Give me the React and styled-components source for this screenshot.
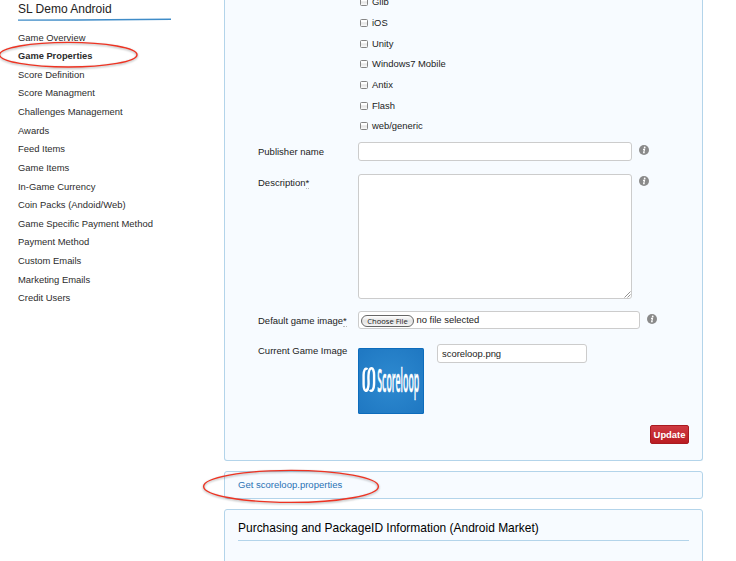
import React from "react";
import styled, { createGlobalStyle } from "styled-components";

const GlobalStyle = createGlobalStyle`
  * { box-sizing: border-box; }
  body {
    margin: 0;
    overflow: hidden;
    background: #fff;
    color: #222;
    font-family: "Liberation Sans", Arial, sans-serif;
    font-size: 9.42px;
  }
`;

const Page = styled.div`
  position: relative;
  display: flex;
  width: 736px;
  height: 561px;
  overflow: hidden;
`;

const Sidebar = styled.nav`
  flex: 0 0 224px;
  padding: 1px 0 0 18px;
`;

const SidebarTitle = styled.h2`
  margin: 0;
  font-size: 12px;
  font-weight: 400;
  line-height: 16px;
`;

const TitleRule = styled.svg`
  display: block;
  width: 154px;
  height: 5px;
`;

const Menu = styled.ul`
  list-style: none;
  margin: 0;
  padding: 6.6px 0 0;
`;

const MenuItem = styled.li`
  height: 18.64px;
  line-height: 18.64px;
  color: #2c2c2c;
  font-weight: ${(p) => (p.$active ? 700 : 400)};
  font-size: ${(p) => (p.$active ? "9.3px" : "inherit")};
`;

const Main = styled.main`
  display: flex;
  flex-direction: column;
  gap: 10px;
  width: 479px;
`;

const Panel = styled.section`
  flex: none;
  height: ${(p) => p.$height}px;
  border: 1px solid #b3d4ea;
  border-top-width: ${(p) => (p.$cut ? 0 : 1)}px;
  border-radius: ${(p) => (p.$cut ? "0 0 3px 3px" : "3px")};
  background: #f7fbff;
  padding: 0 13px;
`;

const Checks = styled.div`
  display: flex;
  flex-direction: column;
  height: 145.4px;
  margin: -8.4px 0 0 120.5px;
`;

const CheckRow = styled.label`
  display: flex;
  flex: none;
  align-items: center;
  gap: 4.5px;
  height: 20.67px;
  padding-left: 1px;
`;

const CheckBox = styled.span`
  width: 8px;
  height: 8px;
  margin-top: 1px;
  border: 1px solid #858585;
  border-radius: 1.5px;
  background: linear-gradient(#fff 0 25%, #e4e4e4 50%, #fafafa);
`;

const Field = styled.div`
  display: flex;
  align-items: flex-start;
  height: ${(p) => p.$height}px;
  padding-left: 20px;
`;

const Label = styled.div`
  flex: 0 0 100px;
  padding-top: ${(p) => p.$top}px;
  font-size: 9.5px;
  line-height: 12px;
  white-space: nowrap;
`;

const Required = styled.abbr`
  text-decoration: none;
  border-bottom: 1px dotted #bbb;
`;

const TextBox = styled.div`
  display: flex;
  flex: none;
  align-items: center;
  width: ${(p) => p.$width}px;
  height: ${(p) => p.$height}px;
  margin-top: ${(p) => p.$top || 0}px;
  padding: 0 3px 0 4px;
  border: 1px solid #ccc;
  border-radius: 3px;
  background: #fff;
`;

const TextArea = styled(TextBox)`
  align-items: flex-end;
  justify-content: flex-end;
  padding: 0;
`;

const FileBox = styled(TextBox)`
  padding: 0 2px;
  gap: 2.5px;
  line-height: 10px;
`;

const FileName = styled.span`
  padding-bottom: 1px;
`;

const Grip = styled.svg`
  width: 7px;
  height: 7px;
`;

const FileButton = styled.span`
  flex: none;
  width: 53px;
  height: 12px;
  margin-top: 1px;
  border: 1px solid #666;
  border-radius: 6px;
  background: linear-gradient(#fff, #e3e3e3 50%, #f6f6f6);
  font: 500 7.6px/10px "Open Sans", sans-serif;
  text-align: center;
  white-space: nowrap;
`;

const InfoMark = styled.svg`
  flex: none;
  width: 10px;
  height: 10px;
  margin: ${(p) => p.$top}px 0 0 7px;
`;

const Logo = styled.svg`
  flex: none;
  width: 66px;
  height: 66px;
  margin: 3.5px 13px 0 0;
`;

const Actions = styled.div`
  display: flex;
  justify-content: flex-end;
`;

const UpdateButton = styled.button`
  width: 39px;
  height: 19px;
  padding: 0;
  border: 1px solid #a91a20;
  border-radius: 2px;
  background: linear-gradient(#cf3a42, #ba1c22);
  color: #fff;
  font: 700 9.4px/17px "Liberation Sans", Arial, sans-serif;
`;

const Link = styled.a`
  color: #2a72b5;
  font-size: 9.52px;
  line-height: 26px;
`;

const PanelTitle = styled.h2`
  margin: 0;
  height: 31px;
  padding-top: 10px;
  border-bottom: 1px solid #b3d4ea;
  color: #000;
  font-size: 11.97px;
  font-weight: 400;
  line-height: 16px;
`;

const Markup = styled.svg`
  position: absolute;
  inset: 0;
  width: 736px;
  height: 561px;
  pointer-events: none;
  filter: drop-shadow(0 1px 1px rgba(0, 0, 0, 0.35));
`;

const menu = [
  "Game Overview",
  "Game Properties",
  "Score Definition",
  "Score Managment",
  "Challenges Management",
  "Awards",
  "Feed Items",
  "Game Items",
  "In-Game Currency",
  "Coin Packs (Andoid/Web)",
  "Game Specific Payment Method",
  "Payment Method",
  "Custom Emails",
  "Marketing Emails",
  "Credit Users",
];

const platforms = ["Glib", "iOS", "Unity", "Windows7 Mobile", "Antix", "Flash", "web/generic"];

function Info({ top }) {
  return (
    <InfoMark $top={top} viewBox="0 0 10 10">
      <circle cx="5" cy="5" r="5" fill="#8a8a8a" />
      <circle cx="5.7" cy="2.5" r="0.9" fill="#fff" />
      <path d="M4 4.3H5.5L4.7 7.6H5.7" fill="none" stroke="#fff" strokeWidth="1.2" />
    </InfoMark>
  );
}

function ScoreloopLogo() {
  return (
    <Logo viewBox="0 0 66 66">
      <defs>
        <radialGradient id="logoFill" cx="50%" cy="50%" r="65%">
          <stop offset="0" stopColor="#2e8ad0" />
          <stop offset="1" stopColor="#2079c3" />
        </radialGradient>
      </defs>
      <rect width="66" height="66" rx="1.5" fill="#0d6cbc" />
      <rect x="1" y="1" width="64" height="64" rx="1" fill="url(#logoFill)" />
      <g fill="none" stroke="#fff" strokeWidth="2.4">
        <path d="M9.4 21.5C7.2 18.8 5.6 23 5.6 27V36C5.6 43.5 9 44.5 9.8 40.5" />
        <path d="M8.8 42.5C12 38 10 33.5 10.5 27.5C11 18 16.1 18 16.1 27V35C16.1 42 13.6 44.5 12 41.8" />
      </g>
      <text
        transform="translate(19.2 44) scale(.5 1)"
        fill="#fff"
        stroke="#fff"
        strokeWidth="0.5"
        fontFamily="Open Sans, sans-serif"
        fontWeight="600"
        fontSize="32"
        textLength="84"
        lengthAdjust="spacingAndGlyphs"
      >
        Scoreloop
      </text>
    </Logo>
  );
}

export default function App() {
  return (
    <>
      <GlobalStyle />
      <Page>
        <Sidebar>
          <SidebarTitle>SL Demo Android</SidebarTitle>
          <TitleRule viewBox="0 0 154 5">
            <path d="M0 3.1L60 3L153 2.2" fill="none" stroke="#3f8cc8" strokeWidth="1.4" />
          </TitleRule>
          <Menu>
            {menu.map((item) => (
              <MenuItem key={item} $active={item === "Game Properties"}>
                {item}
              </MenuItem>
            ))}
          </Menu>
        </Sidebar>
        <Main>
          <Panel $height={461} $cut>
            <Checks>
              {platforms.map((name) => (
                <CheckRow key={name}>
                  <CheckBox />
                  {name}
                </CheckRow>
              ))}
            </Checks>
            <Field $height={37}>
              <Label $top={9}>Publisher name</Label>
              <TextBox $width={274} $height={19} $top={5} />
              <Info top={8.2} />
            </Field>
            <Field $height={137}>
              <Label $top={3}>
                Description<Required>*</Required>
              </Label>
              <TextArea $width={274} $height={125}>
                <Grip viewBox="0 0 7 7">
                  <path d="M0.5 6.5L6.5 0.5M3.5 6.5L6.5 3.5" stroke="#777" strokeWidth="0.8" />
                </Grip>
              </TextArea>
              <Info top={2.3} />
            </Field>
            <Field $height={33}>
              <Label $top={4}>
                Default game image<Required>*</Required>
              </Label>
              <FileBox $width={282} $height={18}>
                <FileButton>Choose File</FileButton>
                <FileName>no file selected</FileName>
              </FileBox>
              <Info top={3.2} />
            </Field>
            <Field $height={81}>
              <Label $top={1}>Current Game Image</Label>
              <ScoreloopLogo />
              <TextBox $width={150} $height={19}>
                scoreloop.png
              </TextBox>
            </Field>
            <Actions>
              <UpdateButton>Update</UpdateButton>
            </Actions>
          </Panel>
          <Panel $height={28}>
            <Link>Get scoreloop.properties</Link>
          </Panel>
          <Panel $height={60}>
            <PanelTitle>Purchasing and PackageID Information (Android Market)</PanelTitle>
          </Panel>
        </Main>
        <Markup viewBox="0 0 736 561">
          <g fill="none" stroke="#ee3322" strokeWidth="1.4">
            <ellipse cx="68.3" cy="54.7" rx="68.7" ry="12.3" />
            <ellipse cx="291" cy="486.4" rx="87.4" ry="16" />
          </g>
        </Markup>
      </Page>
    </>
  );
}
